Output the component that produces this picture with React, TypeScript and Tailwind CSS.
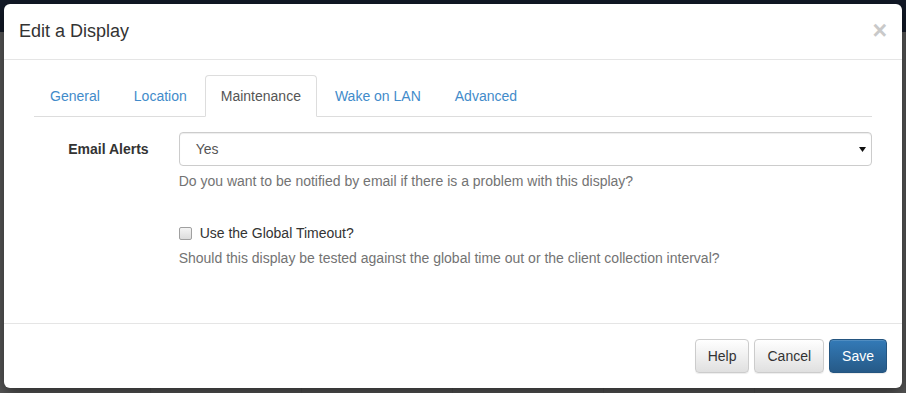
import { useState } from "react";

const tabs = ["General", "Location", "Maintenance", "Wake on LAN", "Advanced"];

function Checkbox() {
  return (
    <span className="mr-[8px] inline-block h-[13px] w-[13px] shrink-0 rounded-[2px] border border-[#a0a0a0] bg-gradient-to-b from-[#f4f4f4] to-[#dcdcdc]" />
  );
}

export default function App() {
  const [active, setActive] = useState("Maintenance");

  return (
    <div className="relative h-[393px] w-full overflow-hidden bg-[#585858] font-['Liberation_Sans',Arial,sans-serif] text-[14px] leading-[20px] text-[#333]">
      <div className="h-[32px] bg-[#121927]" />
      <div className="grid grid-cols-6">
        {[0, 1, 2, 3, 4, 5].map((i) => (
          <div key={i} className="h-[361px] border-r border-[#525252]" />
        ))}
      </div>

      <div className="absolute left-[4px] top-[4px] flex h-[384px] w-[898px] flex-col rounded-[6px] bg-white shadow-[0_5px_15px_rgba(0,0,0,0.5)]">
        {/* header */}
        <div className="flex items-start justify-between border-b border-[#e5e5e5] px-[15px] pb-[15px] pt-[15px]">
          <h4 className="text-[18px] leading-[25px] text-[#333]">Edit a Display</h4>
          <button className="mt-[-1px] text-[25px] font-bold leading-[25px] text-[#c9c9c9]">×</button>
        </div>

        {/* body */}
        <div className="flex-1 px-[30px] pt-[15px]">
          <ul className="flex border-b border-[#ddd]">
            {tabs.map((t) => (
              <li key={t} className="mb-[-1px] mr-[2px]">
                <a
                  onClick={() => setActive(t)}
                  className={
                    t === active
                      ? "block cursor-default rounded-t-[4px] border border-[#ddd] border-b-transparent bg-white px-[15px] py-[10px] text-[#555]"
                      : "block cursor-pointer rounded-t-[4px] border border-transparent px-[15px] py-[10px] text-[#428bca]"
                  }
                >
                  {t}
                </a>
              </li>
            ))}
          </ul>

          <div className="mx-[-15px] mt-[15px]">
            <div className="flex">
              <label className="w-[144.67px] shrink-0 px-[15px] pt-[7px] text-right font-bold">Email Alerts</label>
              <div className="flex-1 px-[15px]">
                <div className="flex h-[34px] items-center justify-between rounded-[4px] border border-[#ccc] pl-[16px] pr-[5px] text-[#555] shadow-[inset_0_1px_1px_rgba(0,0,0,0.075)]">
                  <span>Yes</span>
                  <svg width="7" height="5" viewBox="0 0 7 5">
                    <path d="M0 0h7L3.5 5z" fill="#111" />
                  </svg>
                </div>
                <p className="mb-[10px] mt-[5px] text-[#737373]">Do you want to be notified by email if there is a problem with this display?</p>
              </div>
            </div>

            <div className="mt-[15px] flex">
              <div className="w-[144.67px] shrink-0" />
              <div className="flex-1 px-[15px]">
                <label className="flex items-center pt-[7px]">
                  <Checkbox />
                  Use the Global Timeout?
                </label>
                <p className="mt-[5px] text-[#737373]">
                  Should this display be tested against the global time out or the client collection interval?
                </p>
              </div>
            </div>
          </div>
        </div>

        {/* footer */}
        <div className="flex justify-end gap-[5px] border-t border-[#e5e5e5] p-[15px]">
          <button className="h-[34px] rounded-[4px] border border-[#ccc] bg-gradient-to-b from-white to-[#e0e0e0] px-[12px] text-[#333] shadow-[inset_0_1px_0_rgba(255,255,255,0.15),0_1px_1px_rgba(0,0,0,0.075)]">
            Help
          </button>
          <button className="h-[34px] rounded-[4px] border border-[#ccc] bg-gradient-to-b from-white to-[#e0e0e0] px-[12px] text-[#333] shadow-[inset_0_1px_0_rgba(255,255,255,0.15),0_1px_1px_rgba(0,0,0,0.075)]">
            Cancel
          </button>
          <button className="h-[34px] rounded-[4px] border border-[#245580] bg-gradient-to-b from-[#337ab7] to-[#265a88] px-[12px] text-white shadow-[inset_0_1px_0_rgba(255,255,255,0.15),0_1px_1px_rgba(0,0,0,0.075)]">
            Save
          </button>
        </div>
      </div>
    </div>
  );
}
